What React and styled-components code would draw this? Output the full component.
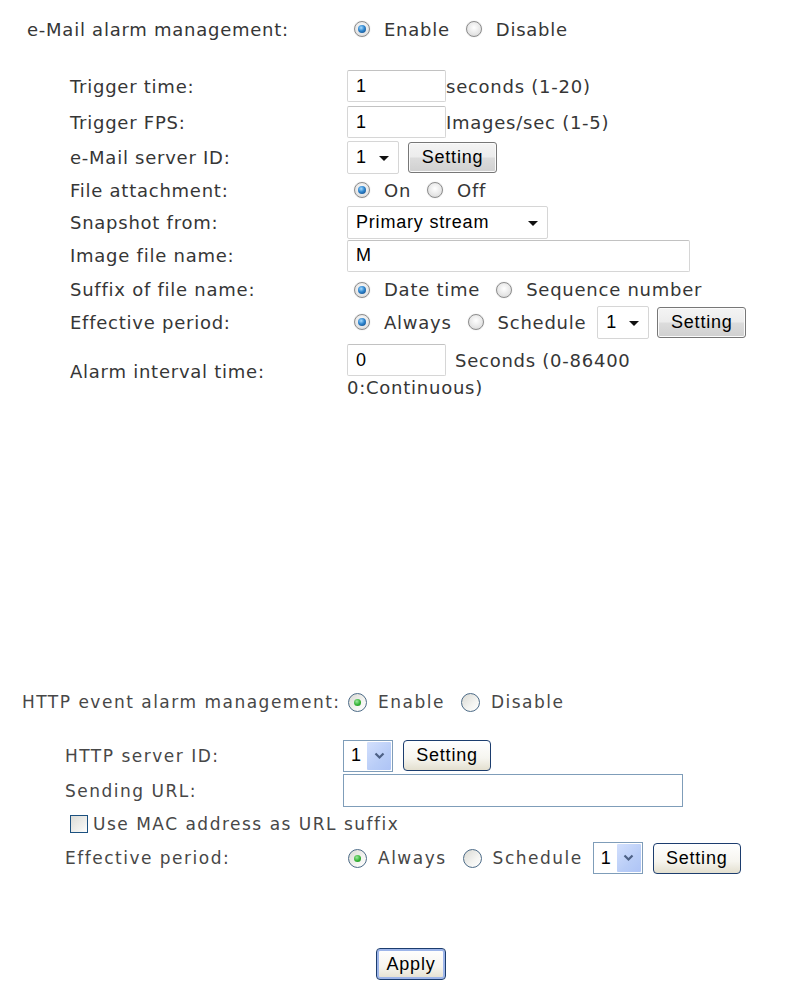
import React from 'react'
import styled, { createGlobalStyle, css } from 'styled-components'

const GlobalStyle = createGlobalStyle`
  html, body {
    margin: 0;
    padding: 0;
    background: #fff;
  }
  body {
    font-family: "DejaVu Sans", Verdana, sans-serif;
  }
`

const Page = styled.div`
  width: 789px;
  height: 1003px;
  overflow: hidden;
`

const Section = styled.section`
  font-size: ${p => (p.$xp ? 17 : 18)}px;
  letter-spacing: ${p => (p.$xp ? 1.5 : 0.75)}px;
  color: ${p => (p.$xp ? '#474747' : '#363636')};
  margin-top: ${p => p.$top}px;
`

const HeadRow = styled.div`
  display: flex;
  align-items: center;
  height: ${p => p.$h}px;
  padding-left: ${p => p.$indent}px;
`

const HeadLabel = styled.div`
  width: ${p => p.$w}px;
  white-space: nowrap;
`

const Rows = styled.div`
  display: flex;
  flex-direction: column;
  margin-top: ${p => p.$top}px;
  padding-left: ${p => p.$indent}px;
`

const Row = styled.div`
  display: flex;
  align-items: center;
  height: ${p => p.$h}px;
`

const Label = styled.div`
  width: ${p => p.$w}px;
  flex: none;
  white-space: nowrap;
`

const Control = styled.div`
  display: flex;
  align-items: center;
  white-space: nowrap;
`

const controlFont = css`
  font-family: "Liberation Sans", Arial, sans-serif;
  font-size: 18px;
  letter-spacing: 0.8px;
  color: #000;
`

const TextBox = styled.input`
  box-sizing: border-box;
  width: ${p => p.$w}px;
  height: ${p => (p.$xp ? 33 : 32)}px;
  margin: 0;
  padding: 0 8px;
  ${controlFont}
  background: #fff;
  outline: none;
  ${p =>
    p.$xp
      ? css`
          border: 1px solid #7f9db9;
        `
      : css`
          border: 1px solid #d6d6d6;
          border-top-color: #c2c2c2;
          border-radius: 2px;
        `}
`

const SelectBox = styled.div`
  box-sizing: border-box;
  display: flex;
  align-items: center;
  justify-content: space-between;
  width: ${p => p.$w}px;
  height: ${p => (p.$xp ? 32 : 33)}px;
  margin-left: ${p => p.$ml ?? 0}px;
  ${controlFont}
  background: #fff;
  ${p =>
    p.$xp
      ? css`
          border: 1px solid #7f9db9;
          padding: 1px 1px 1px 7px;
        `
      : css`
          border: 1px solid #d6d6d6;
          border-radius: 2px;
          padding: 0 9px 0 8px;
        `}
`

const Caret = styled.span`
  width: 0;
  height: 0;
  border-left: 5px solid transparent;
  border-right: 5px solid transparent;
  border-top: 5px solid #111;
  margin-top: 2px;
`

const XpArrow = styled.span`
  display: flex;
  align-items: center;
  justify-content: center;
  width: 24px;
  align-self: stretch;
  background: linear-gradient(135deg, #d3e0fd 0%, #b9cdf7 60%, #aec4f6 100%);
  border-radius: 1px;
`

const Button = styled.button`
  box-sizing: border-box;
  width: ${p => p.$w}px;
  height: ${p => p.$h ?? 31}px;
  margin: 0 0 0 ${p => p.$ml ?? 0}px;
  padding: 0;
  ${controlFont}
  cursor: pointer;
  ${p =>
    p.$xp
      ? css`
          border: 1px solid #1c3d6e;
          border-radius: 4px;
          background: linear-gradient(#ffffff 0%, #f6f5ef 60%, #e3dfcf 100%);
        `
      : css`
          border: 1px solid #777;
          border-radius: 3px;
          background: linear-gradient(#f4f4f4 0%, #ececec 48%, #dcdcdc 52%, #d0d0d0 100%);
          box-shadow: inset 0 0 0 1px #fbfbfb;
        `}
  ${p =>
    p.$primary &&
    css`
      border: 1px solid #1c3d6e;
      box-shadow: inset 0 0 0 2px #9db5e9;
    `}
`

const Option = styled.label`
  display: flex;
  align-items: center;
  gap: ${p => (p.$xp ? 11 : 14)}px;
  margin-right: ${p => (p.$xp ? 11 : 9)}px;
`

const Radio = styled.span`
  box-sizing: border-box;
  position: relative;
  flex: none;
  border-radius: 50%;
  ${p =>
    p.$xp
      ? css`
          width: 19px;
          height: 19px;
          margin-left: 5px;
          border: 1px solid #4d6b87;
          background: linear-gradient(135deg, #d9d9d3 0%, #f4f4f1 60%, #ffffff 100%);
        `
      : css`
          width: 16px;
          height: 16px;
          margin-left: 7px;
          border: 1px solid #8c8c8c;
          background: radial-gradient(circle at 50% 40%, #ffffff 0%, #e6e6e6 60%, #cfcfcf 100%);
          box-shadow: 0 0 1px #bbb;
        `}
  &::after {
    content: '';
    position: absolute;
    display: ${p => (p.$on ? 'block' : 'none')};
    border-radius: 50%;
    ${p =>
      p.$xp
        ? css`
            left: 5px;
            top: 5px;
            width: 7px;
            height: 7px;
            background: radial-gradient(circle at 40% 35%, #9de89d 0%, #35b335 55%, #1e871e 100%);
          `
        : css`
            left: 3px;
            top: 3px;
            width: 8px;
            height: 8px;
            background: radial-gradient(circle at 40% 35%, #a8dcff 0%, #2f86cf 45%, #0d3f78 100%);
          `}
  }
`

const Check = styled.span`
  box-sizing: border-box;
  flex: none;
  width: 18px;
  height: 18px;
  margin: 0 5px 0 5px;
  border: 1px solid #1c5180;
  background: linear-gradient(135deg, #dcdcd7 0%, #f2f2ef 70%, #ffffff 100%);
`

const Unit = styled.span`
  margin-left: ${p => p.$ml ?? 0}px;
`

const IntervalBlock = styled.div`
  display: flex;
  flex-direction: column;
  gap: 1px;
`

const Footer = styled.div`
  margin-top: ${p => p.$top}px;
  padding-left: 376px;
`

const XpChevron = () => (
  <svg width="11" height="8" viewBox="0 0 11 8">
    <path d="M1.5 1.5 L5.5 5.5 L9.5 1.5" fill="none" stroke="#4d6185" strokeWidth="2.2" />
  </svg>
)

const RadioOpt = ({ xp, on, children }) => (
  <Option $xp={xp}>
    <Radio $xp={xp} $on={on} />
    <span>{children}</span>
  </Option>
)

const Select = ({ xp, w, ml, value }) => (
  <SelectBox $xp={xp} $w={w} $ml={ml}>
    <span>{value}</span>
    {xp ? (
      <XpArrow>
        <XpChevron />
      </XpArrow>
    ) : (
      <Caret />
    )}
  </SelectBox>
)

export default function App() {
  return (
    <Page>
      <GlobalStyle />
      <Section $top={10}>
        <HeadRow $h={38} $indent={27}>
          <HeadLabel $w={320}>e-Mail alarm management:</HeadLabel>
          <Control>
            <RadioOpt on>Enable</RadioOpt>
            <RadioOpt>Disable</RadioOpt>
          </Control>
        </HeadRow>
        <Rows $top={20} $indent={70}>
          <Row $h={36}>
            <Label $w={277}>Trigger time:</Label>
            <Control>
              <TextBox $w={99} readOnly value="1" />
              <Unit>seconds (1-20)</Unit>
            </Control>
          </Row>
          <Row $h={36}>
            <Label $w={277}>Trigger FPS:</Label>
            <Control>
              <TextBox $w={99} readOnly value="1" />
              <Unit>Images/sec (1-5)</Unit>
            </Control>
          </Row>
          <Row $h={34}>
            <Label $w={277}>e-Mail server ID:</Label>
            <Control>
              <Select w={52} value="1" />
              <Button $w={89} $ml={9}>Setting</Button>
            </Control>
          </Row>
          <Row $h={32}>
            <Label $w={277}>File attachment:</Label>
            <Control>
              <RadioOpt on>On</RadioOpt>
              <RadioOpt>Off</RadioOpt>
            </Control>
          </Row>
          <Row $h={32}>
            <Label $w={277}>Snapshot from:</Label>
            <Control>
              <Select w={201} value="Primary stream" />
            </Control>
          </Row>
          <Row $h={35}>
            <Label $w={277}>Image file name:</Label>
            <Control>
              <TextBox $w={343} readOnly value="M" />
            </Control>
          </Row>
          <Row $h={33}>
            <Label $w={277}>Suffix of file name:</Label>
            <Control>
              <RadioOpt on>Date time</RadioOpt>
              <RadioOpt>Sequence number</RadioOpt>
            </Control>
          </Row>
          <Row $h={32}>
            <Label $w={277}>Effective period:</Label>
            <Control>
              <RadioOpt on>Always</RadioOpt>
              <RadioOpt>Schedule</RadioOpt>
              <Select w={52} ml={2} value="1" />
              <Button $w={89} $ml={8}>Setting</Button>
            </Control>
          </Row>
          <Row $h={66}>
            <Label $w={277}>Alarm interval time:</Label>
            <IntervalBlock>
              <Control>
                <TextBox $w={99} readOnly value="0" />
                <Unit $ml={9}>Seconds (0-86400</Unit>
              </Control>
              <span>0:Continuous)</span>
            </IntervalBlock>
          </Row>
        </Rows>
      </Section>

      <Section $xp $top={280}>
        <HeadRow $h={36} $indent={22}>
          <HeadLabel $w={321}>HTTP event alarm management:</HeadLabel>
          <Control>
            <RadioOpt xp on>Enable</RadioOpt>
            <RadioOpt xp>Disable</RadioOpt>
          </Control>
        </HeadRow>
        <Rows $top={18} $indent={65}>
          <Row $h={35}>
            <Label $w={278}>HTTP server ID:</Label>
            <Control>
              <Select xp w={50} value="1" />
              <Button $xp $w={88} $ml={10}>Setting</Button>
            </Control>
          </Row>
          <Row $h={35}>
            <Label $w={278}>Sending URL:</Label>
            <Control>
              <TextBox $xp $w={340} readOnly value="" />
            </Control>
          </Row>
          <Row $h={32}>
            <Check />
            <span>Use MAC address as URL suffix</span>
          </Row>
          <Row $h={36}>
            <Label $w={278}>Effective period:</Label>
            <Control>
              <RadioOpt xp on>Always</RadioOpt>
              <RadioOpt xp>Schedule</RadioOpt>
              <Select xp w={50} ml={-1} value="1" />
              <Button $xp $w={88} $ml={10}>Setting</Button>
            </Control>
          </Row>
        </Rows>
      </Section>

      <Footer $top={72}>
        <Button $xp $primary $w={70} $h={32}>Apply</Button>
      </Footer>
    </Page>
  )
}
